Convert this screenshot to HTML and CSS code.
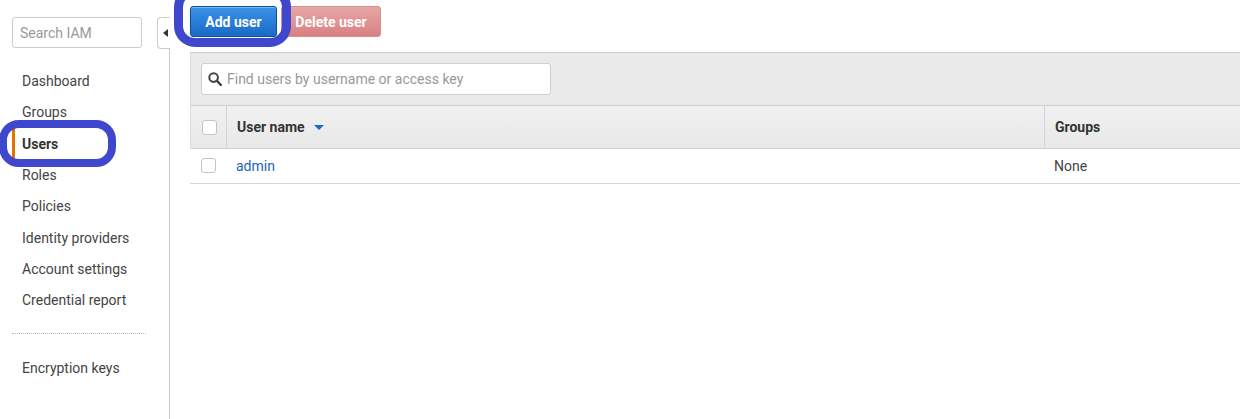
FILE: index.html
```html
<!DOCTYPE html>
<html>
<head>
<meta charset="utf-8">
<link rel="stylesheet" href="styles.css">
</head>
<body>
<div class="layout">
  <aside class="sidebar">
    <div class="side-main">
      <div class="side-search">Search IAM</div>
      <nav class="nav">
        <a class="nav-item">Dashboard</a>
        <a class="nav-item">Groups</a>
        <a class="nav-item active">Users</a>
        <a class="nav-item">Roles</a>
        <a class="nav-item">Policies</a>
        <a class="nav-item">Identity providers</a>
        <a class="nav-item">Account settings</a>
        <a class="nav-item">Credential report</a>
      </nav>
      <div class="nav-sep"></div>
      <nav class="nav">
        <a class="nav-item">Encryption keys</a>
      </nav>
      <div class="ring ring-users"></div>
    </div>
    <div class="rail">
      <div class="rail-tab"><span class="tri"></span></div>
      <div class="rail-line"></div>
    </div>
  </aside>
  <main class="main">
    <div class="toolbar">
      <button class="btn btn-primary">Add user</button>
      <button class="btn btn-danger">Delete user</button>
      <div class="ring ring-add"></div>
    </div>
    <section class="panel">
      <div class="panel-head">
        <div class="filter">
          <svg class="filter-icon" width="14" height="14" viewBox="0 0 14 14"><circle cx="5.6" cy="5.6" r="4.3" fill="none" stroke="#444" stroke-width="2"/><line x1="8.7" y1="8.7" x2="12.8" y2="12.8" stroke="#444" stroke-width="2.4" stroke-linecap="round"/></svg>
          <span class="filter-ph">Find users by username or access key</span>
        </div>
      </div>
      <div class="trow thead">
        <div class="cell c-check"><span class="cb"></span></div>
        <div class="cell c-name">User name <span class="caret"></span></div>
        <div class="cell c-groups">Groups</div>
      </div>
      <div class="trow tbody">
        <div class="cell c-check"><span class="cb"></span></div>
        <div class="cell c-name"><a class="link">admin</a></div>
        <div class="cell c-groups">None</div>
      </div>
    </section>
  </main>
</div>
</body>
</html>
```

FILE: styles.css
```css
* { box-sizing: border-box; }
html, body { margin: 0; padding: 0; background: #fff; }
body {
  font-family: Roboto, "Liberation Sans", Arial, sans-serif;
  font-size: 14px;
  color: #444;
  width: 1240px;
  height: 419px;
  overflow: hidden;
}
.layout { display: flex; height: 419px; }
.sidebar { display: flex; width: 170px; flex: none; }
.side-main { position: relative; width: 157px; padding: 17px 0 0 12px; }
.side-search {
  width: 130px; height: 31px;
  border: 1px solid #ccc; border-radius: 3px;
  color: #999; padding: 0 0 0 7px;
  line-height: 31px;
}
.nav { display: flex; flex-direction: column; }
.nav:first-of-type { margin-top: 17.5px; }
.nav-item {
  height: 31.3px; display: flex; align-items: center;
  padding-left: 10px; color: #444;
}
.nav-item.active { font-weight: bold; color: #333; border-left: 3px solid #e07400; padding-left: 7px; }
.nav-sep { width: 134px; border-top: 1px dotted #bbb; margin: 17.5px 0 18px; }
.rail { width: 13px; display: flex; flex-direction: column; padding-top: 17px; }
.rail-tab {
  height: 32px; border: 1px solid #ccc; border-right: none;
  border-radius: 4px 0 0 4px; position: relative;
  display: flex; align-items: center; padding-left: 5px;
}
.tri { width: 0; height: 0; border-right: 5px solid #333; border-top: 4px solid transparent; border-bottom: 4px solid transparent; }
.rail-line { flex: 1; margin-left: 12px; border-left: 1px solid #ccc; }

.main { flex: 1; padding-left: 20px; position: relative; }
.toolbar { display: flex; gap: 4px; padding-top: 6px; position: relative; }
.btn {
  font-family: inherit; font-size: 14px; font-weight: bold; color: #fff;
  height: 31px; border-radius: 3px; padding: 0; cursor: default;
  white-space: nowrap; text-align: center;
}
.btn-primary {
  width: 87px;
  background: linear-gradient(#3a93e8, #1a6ac6);
  border: 1px solid #0f4f99;
  box-shadow: inset 0 1px 0 rgba(255,255,255,0.35);
}
.btn-danger {
  width: 100px;
  background: linear-gradient(#e8a6a6, #d98080);
  border: 1px solid #d59090;
}
.ring {
  position: absolute;
  border: 9px solid #3f48cc;
  border-radius: 21px;
  pointer-events: none;
}
.ring-add { left: -16px; top: -14px; width: 117px; height: 61px; }
.ring-users { left: -1px; top: 120px; width: 117px; height: 47px; border-width: 8px; border-radius: 20px; }

.panel { margin-top: 15px; }
.panel-head {
  background: #eaeaea;
  border-top: 1px solid #cfcfcf;
  border-left: 1px solid #dcdcdc;
  border-bottom: 1px solid #cfcfcf;
  padding: 10px 0 10px 10px;
  height: 54px;
}
.filter {
  width: 350px; height: 32px; background: #fff;
  border: 1px solid #d0d0d0; border-radius: 3px;
  display: flex; align-items: center; gap: 5px; padding-left: 6px;
}
.filter-ph { color: #999; }
.trow { display: flex; }
.thead {
  height: 43px;
  background: linear-gradient(#f1f1f1, #e8e8e8);
  border-left: 1px solid #dcdcdc;
  border-bottom: 1px solid #cfcfcf;
  font-weight: bold; color: #333;
}
.tbody { height: 35px; padding-bottom: 1px; border-bottom: 1px solid #d5d5d5; }
.cell { display: flex; align-items: center; }
.c-check { width: 36px; padding-left: 11px; }
.c-name { width: 818px; padding-left: 10px; }
.c-groups { flex: 1; padding-left: 10px; }
.thead .c-check, .thead .c-name { border-right: 1px solid #d5d5d5; }
.tbody .c-check { padding-left: 11px; }
.cb {
  width: 15px; height: 15px; border: 1px solid #c4c4c4; border-radius: 3px; background: #fff;
}
.caret {
  display: inline-block; width: 0; height: 0; margin-left: 9px; margin-top: 1px;
  border-top: 5px solid #1a6cc0; border-left: 5px solid transparent; border-right: 5px solid transparent;
}
.link { color: #1a66b8; }
```
